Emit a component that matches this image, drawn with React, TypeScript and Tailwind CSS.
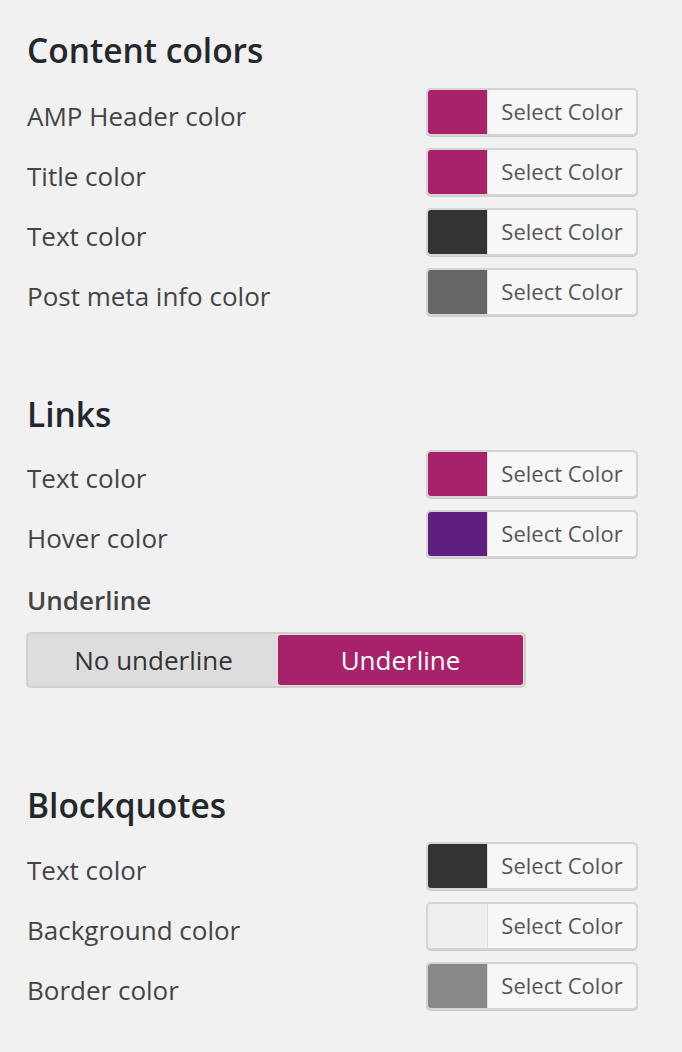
import React from 'react';

type ColorRow = { label: string; color: string };

const contentColors: ColorRow[] = [
  { label: 'AMP Header color', color: '#a8226a' },
  { label: 'Title color', color: '#a8226a' },
  { label: 'Text color', color: '#333333' },
  { label: 'Post meta info color', color: '#666666' },
];

const linkColors: ColorRow[] = [
  { label: 'Text color', color: '#a8226a' },
  { label: 'Hover color', color: '#5f1e80' },
];

const quoteColors: ColorRow[] = [
  { label: 'Text color', color: '#333333' },
  { label: 'Background color', color: '#eeeeee' },
  { label: 'Border color', color: '#888888' },
];

function ColorPicker({ label, color }: ColorRow) {
  return (
    <div className="flex h-[60px] items-center justify-between">
      <span className="pt-[8px] text-[26px] leading-[36px] text-[#444]">{label}</span>
      <button className="flex h-[48px] w-[212px] overflow-hidden rounded-[5px] border-2 border-[#d4d4d4] bg-[#f7f7f7] shadow-[0_1px_0_#ccc]">
        <span className="h-full w-[60px] shrink-0 border-r border-[#ddd]" style={{ backgroundColor: color }} />
        <span className="flex flex-1 items-center justify-center pb-[2px] text-[22px] text-[#555]">Select Color</span>
      </button>
    </div>
  );
}

function SectionTitle({ children }: { children: React.ReactNode }) {
  return <h2 className="text-[33.5px] font-semibold leading-[40px] text-[#23282d]">{children}</h2>;
}

export default function App() {
  return (
    <div
      className="min-h-[1052px] w-[682px] bg-[#f1f1f1] pl-[27px] pr-[44px] pt-[30px]"
      style={{ fontFamily: '"Open Sans", "Noto Sans", sans-serif' }}
    >
      <SectionTitle>Content colors</SectionTitle>
      <div className="mt-[12px]">
        {contentColors.map((r) => (
          <ColorPicker key={r.label} {...r} />
        ))}
      </div>

      <div className="mt-[72px]">
        <SectionTitle>Links</SectionTitle>
      </div>
      <div className="mt-[10px]">
        {linkColors.map((r) => (
          <ColorPicker key={r.label} {...r} />
        ))}
      </div>

      <div className="mt-[18px] text-[26px] font-semibold leading-[36px] text-[#444]">Underline</div>
      <div className="mt-[14px] -ml-[1px] flex h-[56px] w-[500px] rounded-[5px] border-2 border-[#d0d0d0] bg-[#dddddd] p-[1px]">
        <div className="flex flex-1 items-center justify-center text-[26px] text-[#333]">No underline</div>
        <div className="flex w-[245px] items-center justify-center rounded-[3px] bg-[#a8226a] text-[26px] text-white">
          Underline
        </div>
      </div>

      <div className="mt-[97px]">
        <SectionTitle>Blockquotes</SectionTitle>
      </div>
      <div className="mt-[11px]">
        {quoteColors.map((r) => (
          <ColorPicker key={r.label} {...r} />
        ))}
      </div>
    </div>
  );
}
